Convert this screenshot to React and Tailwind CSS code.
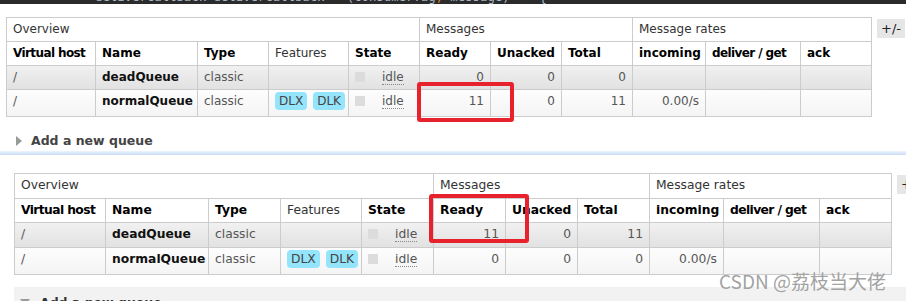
import React from 'react';

const W1 = ['w-[89px]', 'w-[102px]', 'w-[71px]', 'w-[80px]', 'w-[71px]', 'w-[71px]', 'w-[71px]', 'w-[71px]', 'w-[73px]', 'w-[95px]', 'w-[71px]'];
const W2 = ['w-[91px]', 'w-[103px]', 'w-[72px]', 'w-[81px]', 'w-[72px]', 'w-[72px]', 'w-[72px]', 'w-[72px]', 'w-[74px]', 'w-[96px]', 'w-[72px]'];

const HEADS = [
  { t: 'Virtual host', b: true, tight: true },
  { t: 'Name', b: true },
  { t: 'Type', b: true },
  { t: 'Features', b: false },
  { t: 'State', b: true },
  { t: 'Ready', b: true },
  { t: 'Unacked', b: true },
  { t: 'Total', b: true },
  { t: 'incoming', b: true },
  { t: 'deliver / get', b: true, tight: true },
  { t: 'ack', b: true },
];

function Cell({ w, className = '', children }) {
  return (
    <div className={`${w} shrink-0 box-border overflow-hidden whitespace-nowrap border-r border-b border-[#ccc] px-[6px] pt-[4px] ${className}`}>
      {children}
    </div>
  );
}

function Badge({ children }) {
  return (
    <span className="inline-block h-[18px] rounded-[4px] bg-[#94e4fb] px-[4px] leading-[18px] text-[#444]">
      {children}
    </span>
  );
}

function QueueRow({ w, h, alt, q }) {
  const bg = alt ? 'bg-linear-to-b from-[#f1f1f1] to-[#e1e1e1]' : 'bg-linear-to-b from-[#fdfdfd] to-[#f4f4f4]';
  return (
    <div className={`flex ${h} ${bg} text-[#555]`}>
      <Cell w={w[0]}>/</Cell>
      <Cell w={w[1]} className="font-bold text-[#111]">{q.name}</Cell>
      <Cell w={w[2]}>classic</Cell>
      <Cell w={w[3]} className={q.dlx ? '!pt-[2px]' : ''}>
        {q.dlx && (
          <div className="flex gap-[6px]">
            <Badge>DLX</Badge>
            <Badge>DLK</Badge>
          </div>
        )}
      </Cell>
      <Cell w={w[4]}>
        <div className="flex items-start">
          <span className="mt-[2px] h-[10px] w-[10px] bg-[#dcdcdc]" />
          <span className="ml-[17px] border-b border-dotted border-[#888] leading-[14px]">idle</span>
        </div>
      </Cell>
      <Cell w={w[5]} className="text-right">{q.ready}</Cell>
      <Cell w={w[6]} className="text-right">{q.unacked}</Cell>
      <Cell w={w[7]} className="text-right">{q.total}</Cell>
      <Cell w={w[8]} className="text-right">{q.rate}</Cell>
      <Cell w={w[9]} />
      <Cell w={w[10]} />
    </div>
  );
}

function QueueTable({ w, spans, heights, rows, size }) {
  return (
    <div className={`flex items-start ${size} leading-[15px]`}>
      <div className="border-l border-t border-[#ccc] bg-white">
        <div className={`flex ${heights[0]} text-[#333]`}>
          <Cell w={spans[0]}>Overview</Cell>
          <Cell w={spans[1]}>Messages</Cell>
          <Cell w={spans[2]}>Message rates</Cell>
        </div>
        <div className={`flex ${heights[1]}`}>
          {HEADS.map((c, i) => (
            <Cell
              key={c.t}
              w={w[i]}
              className={`${c.b ? 'font-bold text-black' : 'text-[#333]'} ${c.tight ? 'tracking-[-0.6px]' : ''}`}
            >
              {c.t}
            </Cell>
          ))}
        </div>
        <QueueRow w={w} h={heights[2]} alt q={rows[0]} />
        <QueueRow w={w} h={heights[3]} q={rows[1]} />
      </div>
      <div className="ml-[5px] mt-[2px] flex h-[19px] items-center bg-[#e6e6e6] px-[4px] text-[13px] text-[#222]">+/-</div>
    </div>
  );
}

export default function App() {
  const rows1 = [
    { name: 'deadQueue', ready: '0', unacked: '0', total: '0', rate: '' },
    { name: 'normalQueue', ready: '11', unacked: '0', total: '11', rate: '0.00/s', dlx: true },
  ];
  const rows2 = [
    { name: 'deadQueue', ready: '11', unacked: '0', total: '11', rate: '' },
    { name: 'normalQueue', ready: '0', unacked: '0', total: '0', rate: '0.00/s', dlx: true },
  ];

  return (
    <div className="relative h-[301px] w-[906px] overflow-hidden bg-white font-['DejaVu_Sans','Verdana',sans-serif]">
      {/* first screenshot */}
      <div className="h-[155px]">
        <div className="relative h-[4px] overflow-hidden bg-[#2b2b2b]">
          <div className="absolute left-[95px] top-[-10px] whitespace-pre font-['DejaVu_Sans_Mono',monospace] text-[12.3px] leading-[14px] text-[#a9b7c6]">
            deliverCallback deliverCallback = (consumerTag<span className="text-[#cc7832]">,</span> message) -&gt; {'{'}
          </div>
        </div>
        <div className="pl-[6px] pt-[13px]">
          <QueueTable
            w={W1}
            spans={['w-[413px]', 'w-[213px]', 'w-[239px]']}
            heights={['h-[24px]', 'h-[24px]', 'h-[24px]', 'h-[27px]']}
            rows={rows1}
            size="text-[12px]"
          />
        </div>
        <div className="mt-[16px] flex h-[15px] items-center pl-[16px]">
          <span className="h-0 w-0 border-y-[5.5px] border-l-[6px] border-y-transparent border-l-[#999]" />
          <span className="ml-[9px] text-[12.5px] font-bold leading-[15px] text-[#444]">Add a new queue</span>
        </div>
        <div className="mt-[3px] h-[4px] bg-linear-to-b from-[#eef4fc] to-[#c9ddf5]" />
      </div>

      {/* second screenshot */}
      <div className="pl-[14px] pt-[18px]">
        <QueueTable
          w={W2}
          spans={['w-[419px]', 'w-[216px]', 'w-[242px]']}
          heights={['h-[25px]', 'h-[24px]', 'h-[25px]', 'h-[27px]']}
          rows={rows2}
          size="text-[12.3px]"
        />
        <div className="mt-[12px] flex h-[30px] items-start bg-[#f2f2f2] pl-[6px] pt-[8px]">
          <span className="mt-[4px] h-0 w-0 border-x-[5px] border-t-[6px] border-x-transparent border-t-[#999]" />
          <span className="ml-[10px] text-[12.5px] font-bold leading-[15px] text-[#333]">Add a new queue</span>
        </div>
      </div>

      {/* annotations */}
      <div className="absolute left-[417px] top-[82px] h-[40px] w-[97px] rounded-[3px] border-4 border-[#e8222d]" />
      <div className="absolute left-[429px] top-[194px] h-[49px] w-[100px] rounded-[3px] border-4 border-[#e8222d]" />
      <div className="absolute left-[719px] top-[268px] whitespace-nowrap font-['Noto_Sans_CJK_SC',sans-serif] text-[19px] leading-[26px] text-[#a3a3a3]">
        CSDN @荔枝当大佬
      </div>
    </div>
  );
}
